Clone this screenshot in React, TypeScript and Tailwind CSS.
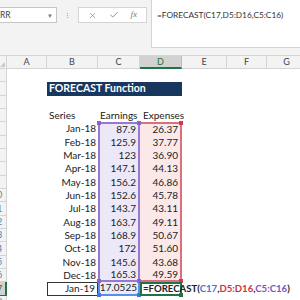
import { X, Check } from "lucide-react";

const dates = ["Jan-18", "Feb-18", "Mar-18", "Apr-18", "May-18", "Jun-18", "Jul-18", "Aug-18", "Sep-18", "Oct-18", "Nov-18", "Dec-18"];
const earnings = ["87.9", "125.9", "123", "147.1", "156.2", "152.6", "143.7", "163.7", "168.9", "172", "145.6", "165.3"];
const expenses = ["26.37", "37.77", "36.90", "44.13", "46.86", "45.78", "43.11", "49.11", "50.67", "51.60", "43.68", "49.59"];

const cols = [
  { key: "A", w: "w-[40px]" },
  { key: "B", w: "w-[51px]" },
  { key: "C", w: "w-[42px]" },
  { key: "D", w: "w-[42px]" },
  { key: "E", w: "w-[45px]" },
  { key: "F", w: "w-[40px]" },
  { key: "G", w: "w-[40px]" },
];

const RowHead = ({ n, active }: { n: number; active?: boolean }) => (
  <div
    className={`w-[7px] h-full shrink-0 overflow-hidden border-b border-r ${
      active ? "bg-[#d2d2d2] border-r-2 border-r-[#217346] text-[#217346]" : "bg-[#f3f3f3] border-[#d4d4d4] text-[#5b7fa8]"
    }`}
  >
    <div className="w-[20px] -ml-[13px] h-full flex items-center justify-center text-[9px]">{n}</div>
  </div>
);

const Handle = ({ color, pos }: { color: string; pos: string }) => (
  <span className={`absolute w-[4px] h-[4px] ${color} ${pos} z-10`} />
);

function Row({ n, children, active }: { n: number; children?: React.ReactNode; active?: boolean }) {
  return (
    <div className="flex h-[13.333px]">
      <RowHead n={n} active={active} />
      {children}
    </div>
  );
}

export default function App() {
  return (
    <div className="w-[300px] h-[300px] overflow-hidden bg-white font-['Lato','Liberation_Sans',sans-serif] text-[#222]">
      {/* ribbon / formula bar */}
      <div className="h-[55px] bg-[#f3f3f3] flex items-start">
        <div className="flex items-center pt-[7px]">
          <div className="w-[58px] h-[16px] bg-white border border-[#c6c6c6] flex items-center justify-between pr-[3px] -ml-[1px]">
            <span className="text-[8.5px] text-[#444]">RR</span>
            <span className="text-[6px] text-[#777]">▼</span>
          </div>
          <div className="w-[21px] flex justify-center">
            <div className="flex flex-col gap-[1px]">
              <span className="w-[1px] h-[1px] bg-[#aaa]" />
              <span className="w-[1px] h-[1px] bg-[#aaa]" />
              <span className="w-[1px] h-[1px] bg-[#aaa]" />
            </div>
          </div>
          <div className="w-[69px] h-[16px] bg-white border border-[#d4d4d4] flex items-center justify-around px-[3px] text-[#777]">
            <X size={9} strokeWidth={1.6} />
            <Check size={10} strokeWidth={2} />
            <span className="font-['Liberation_Serif',serif] italic text-[9px]">fx</span>
          </div>
        </div>
        <div className="ml-[4px] flex-1 h-[48px] bg-white border-l border-b border-[#d4d4d4] pl-[5px] pt-[9px] text-[8.3px] text-[#333] whitespace-nowrap">
          =FORECAST(C17,D5:D16,C5:C16)
        </div>
      </div>

      {/* column headers */}
      <div className="flex h-[14px] bg-[#f3f3f3] border-t border-[#d4d4d4]">
        <div className="w-[7px] shrink-0 border-r border-b border-[#d4d4d4] relative">
          <span className="absolute right-[1px] bottom-[1px] w-0 h-0 border-l-[5px] border-l-transparent border-b-[5px] border-b-[#c8c8c8]" />
        </div>
        {cols.map((c) => (
          <div
            key={c.key}
            className={`${c.w} shrink-0 flex items-center justify-center text-[9px] border-r ${
              c.key === "D"
                ? "bg-[#d2d2d2] border-b-2 border-b-[#217346] border-r-[#bdbdbd] text-[#217346]"
                : "border-b border-[#d4d4d4] text-[#444]"
            }`}
          >
            {c.key}
          </div>
        ))}
      </div>

      {/* sheet */}
      <div className="text-[10px]">
        <Row n={1} />
        <Row n={2}>
          <div className="w-[40px]" />
          <div className="w-[135px] bg-[#17375e] text-white font-bold flex items-center pl-[2px] text-[10.5px]">
            FORECAST Function
          </div>
        </Row>
        <Row n={3} />
        <Row n={4}>
          <div className="w-[40px]" />
          <div className="w-[51px] flex items-center pl-[2px]">Series</div>
          <div className="w-[42px] flex items-center pl-[2px]">Earnings</div>
          <div className="w-[42px] flex items-center pl-[3px]">Expenses</div>
        </Row>
        {dates.map((d, i) => {
          const first = i === 0;
          const last = i === dates.length - 1;
          return (
            <Row key={d} n={i + 5}>
              <div className="w-[40px]" />
              <div className="w-[51px] flex items-center justify-end pr-[2px]">{d}</div>
              <div
                className={`w-[42px] relative flex items-center justify-end pr-[2px] bg-[#ede8f7] border-x-2 border-[#9878d0] ${
                  first ? "border-t-2" : ""
                } ${last ? "border-b-2" : ""}`}
              >
                {first && <Handle color="bg-[#8a63c9]" pos="-left-[3px] -top-[3px]" />}
                {first && <Handle color="bg-[#8a63c9]" pos="-right-[3px] -top-[3px]" />}
                {last && <Handle color="bg-[#8a63c9]" pos="-left-[3px] -bottom-[3px]" />}
                {last && <Handle color="bg-[#8a63c9]" pos="-right-[3px] -bottom-[3px]" />}
                {earnings[i]}
              </div>
              <div
                className={`w-[42px] relative flex items-center justify-end pr-[2px] bg-[#fbe8e9] border-r-2 border-[#d9707c] ${
                  first ? "border-t-2" : ""
                } ${last ? "border-b-2" : ""}`}
              >
                {first && <Handle color="bg-[#cf3b4a]" pos="-right-[3px] -top-[3px]" />}
                {last && <Handle color="bg-[#cf3b4a]" pos="-right-[3px] -bottom-[3px]" />}
                {expenses[i]}
              </div>
            </Row>
          );
        })}
        <Row n={17} active>
          <div className="w-[40px]" />
          <div className="w-[51px] flex items-center justify-end pr-[2px] border border-[#333]">Jan-19</div>
          <div className="w-[42px] relative flex items-center justify-end pr-[1px] bg-[#e9ecf8] border-2 border-[#5b8ee6] border-t-0">
            <Handle color="bg-[#3d78dc]" pos="-left-[3px] -bottom-[3px]" />
            <Handle color="bg-[#3d78dc]" pos="-right-[3px] -bottom-[3px]" />
            17.0525
          </div>
          <div className="w-[42px] relative flex items-center border-2 border-[#217346] overflow-visible whitespace-nowrap z-20">
            <Handle color="bg-[#217346]" pos="-right-[3px] -bottom-[3px]" />
            <span className="font-bold pl-[1px] text-[9.6px]">
              =FORECAST(<span className="text-[#3b78d8]">C17</span>,<span className="text-[#d0313f]">D5:D16</span>,
              <span className="text-[#7d52c4]">C5:C16</span>)
            </span>
            <span className="inline-block w-[1px] h-[10px] bg-[#111] ml-[1px]" />
          </div>
        </Row>
        <Row n={18} />
      </div>
    </div>
  );
}
